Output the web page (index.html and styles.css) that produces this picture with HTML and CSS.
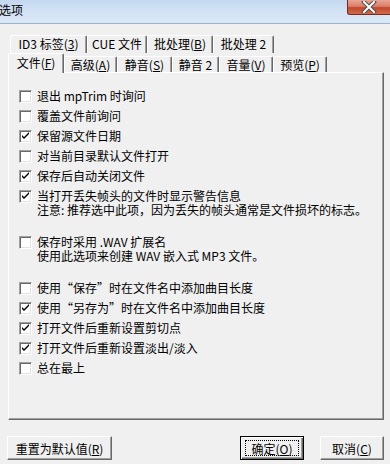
FILE: index.html
```html
<!DOCTYPE html>
<html lang="zh-CN">
<head>
    <meta charset="UTF-8">
    <meta name="viewport" content="width=device-width, initial-scale=1.0">
    <title>选项</title>
    <link rel="stylesheet" href="styles.css">
</head>
<body>
    <div class="window">
        <div class="titlebar">
            <span class="title">选项</span>
            <div class="close-btn">
                <svg width="16" height="12" viewBox="0 0 16 12">
                    <path d="M3 1 L13 11 M13 1 L3 11" stroke="#4a4a4a" stroke-width="4" stroke-linecap="square"/>
                    <path d="M3 1 L13 11 M13 1 L3 11" stroke="#ffffff" stroke-width="2" stroke-linecap="square"/>
                </svg>
            </div>
        </div>

        <div class="dialog">
            <div class="tabs">
                <div class="tab-row back">
                    <div class="tab w-id3">ID3 标签(<u>3</u>)</div>
                    <div class="tab w-cue">CUE 文件</div>
                    <div class="tab w-batch">批处理(<u>B</u>)</div>
                    <div class="tab w-batch2">批处理 2</div>
                </div>
                <div class="tab-row front">
                    <div class="tab selected w-file">文件(<u>F</u>)</div>
                    <div class="tab w-adv">高级(<u>A</u>)</div>
                    <div class="tab w-mute">静音(<u>S</u>)</div>
                    <div class="tab w-mute2">静音 2</div>
                    <div class="tab w-vol">音量(<u>V</u>)</div>
                    <div class="tab w-prev">预览(<u>P</u>)</div>
                </div>
            </div>

            <div class="panel">
                <ul class="options">
                    <li class="option"><span class="check"></span><div class="text">退出 mpTrim 时询问</div></li>
                    <li class="option"><span class="check"></span><div class="text">覆盖文件前询问</div></li>
                    <li class="option"><span class="check on"></span><div class="text">保留源文件日期</div></li>
                    <li class="option"><span class="check"></span><div class="text">对当前目录默认文件打开</div></li>
                    <li class="option"><span class="check on"></span><div class="text">保存后自动关闭文件</div></li>
                    <li class="option"><span class="check on"></span><div class="text">当打开丢失帧头的文件时显示警告信息<br>注意: 推荐选中此项，因为丢失的帧头通常是文件损坏的标志。</div></li>
                    <li class="option group"><span class="check"></span><div class="text">保存时采用 .WAV 扩展名<br>使用此选项来创建 WAV 嵌入式 MP3 文件。</div></li>
                    <li class="option group"><span class="check"></span><div class="text">使用“保存”时在文件名中添加曲目长度</div></li>
                    <li class="option"><span class="check on"></span><div class="text">使用“另存为”时在文件名中添加曲目长度</div></li>
                    <li class="option"><span class="check on"></span><div class="text">打开文件后重新设置剪切点</div></li>
                    <li class="option"><span class="check on"></span><div class="text">打开文件后重新设置淡出/淡入</div></li>
                    <li class="option"><span class="check"></span><div class="text">总在最上</div></li>
                </ul>
            </div>

            <div class="footer">
                <button class="btn btn-reset">重置为默认值(<u>R</u>)</button>
                <span class="spacer"></span>
                <button class="btn btn-default"><span class="focus">确定(<u>O</u>)</span></button>
                <button class="btn">取消(<u>C</u>)</button>
            </div>
        </div>
    </div>
</body>
</html>
```

FILE: styles.css
```css
html, body {
    margin: 0;
    padding: 0;
}

body {
    width: 390px;
    height: 464px;
    overflow: hidden;
    background-color: #f0f0f0;
    font-family: "Noto Sans CJK SC", "DejaVu Sans", sans-serif;
    font-size: 12px;
    color: #000000;
}

u {
    text-decoration: underline;
    text-underline-offset: 1px;
}

.titlebar {
    height: 23px;
    display: flex;
    justify-content: space-between;
    align-items: flex-start;
    background: linear-gradient(to bottom, #c3d7ef 0%, #d3e3f5 50%, #dbe8f7 100%);
    border-bottom: 1px solid #9db3cc;
}

.title {
    line-height: 20px;
    margin-left: -1px;
    color: #000000;
}

.close-btn {
    width: 43px;
    height: 15px;
    display: flex;
    align-items: center;
    justify-content: center;
    background: linear-gradient(to bottom, #e9a594 0%, #d9806a 45%, #c2472c 55%, #d16a4c 100%);
    border-left: 1px solid #7a2a1c;
    border-bottom: 1px solid #7a2a1c;
    border-bottom-left-radius: 3px;
    box-sizing: border-box;
}

.dialog {
    padding: 11px 6px 0 8px;
}

/* tabs */

.tab-row {
    display: flex;
    align-items: flex-end;
}

.tab-row.back {
    padding-left: 2px;
}

.tab {
    height: 17px;
    line-height: 17px;
    text-align: center;
    white-space: nowrap;
    box-sizing: border-box;
    border-top: 1px solid #ffffff;
    border-left: 1px solid #ffffff;
    border-right: 1px solid #696969;
    box-shadow: inset -1px 0 #a0a0a0;
    border-radius: 2px 2px 0 0;
    background-color: #f0f0f0;
}

.tab-row.back .tab {
    height: 18px;
    line-height: 16px;
}

.tab-row.front .tab {
    height: 16px;
    line-height: 15px;
}

.tab-row.front .tab.selected {
    height: 20px;
    line-height: 17px;
    margin-bottom: -1px;
    position: relative;
    z-index: 1;
}

.w-id3 { width: 77px; }
.w-cue { width: 60px; }
.w-batch { width: 66px; }
.w-batch2 { width: 61px; }
.w-file { width: 56px; }
.w-adv { width: 53px; }
.w-mute { width: 55px; }
.w-mute2 { width: 47px; }
.w-vol { width: 54px; }
.w-prev { width: 54px; }

/* panel */

.panel {
    width: 376px;
    height: 348px;
    box-sizing: border-box;
    border-top: 1px solid #ffffff;
    border-left: 1px solid #ffffff;
    border-right: 1px solid #696969;
    border-bottom: 1px solid #696969;
    box-shadow: inset -1px -1px #a0a0a0;
}

.options {
    list-style: none;
    margin: 0;
    padding: 13px 0 0 10px;
}

.option {
    display: flex;
    align-items: flex-start;
    gap: 5px;
    padding: 3px 0;
}

.option.group {
    margin-top: 12px;
}

.option .text {
    line-height: 14px;
    white-space: nowrap;
}

.check {
    width: 13px;
    height: 13px;
    flex: none;
    box-sizing: border-box;
    margin-top: 1px;
    background-color: #ffffff;
    border: 1px solid;
    border-color: #a0a0a0 #ffffff #ffffff #a0a0a0;
    box-shadow: inset 1px 1px #696969, inset -1px -1px #e3e3e3;
}

.check.on {
    background: #ffffff url("data:image/svg+xml;utf8,<svg xmlns='http://www.w3.org/2000/svg' width='11' height='11' viewBox='0 0 11 11'><path d='M2 4 L2 6 L4 8 L9 3 L9 1 L4 6 Z' fill='black'/></svg>") no-repeat center;
}

/* footer buttons */

.footer {
    display: flex;
    align-items: center;
    margin-top: 16px;
    margin-left: -1px;
    gap: 16px;
}

.spacer {
    flex: 1;
}

.btn {
    height: 24px;
    width: 64px;
    padding: 0;
    font-family: inherit;
    font-size: 12px;
    color: #000000;
    background-color: #f0f0f0;
    box-sizing: border-box;
    border: 1px solid;
    border-color: #ffffff #696969 #696969 #ffffff;
    box-shadow: inset -1px -1px #a0a0a0;
    display: flex;
    align-items: center;
    justify-content: center;
}

.btn-reset {
    width: 105px;
}

.btn-default {
    border: 1px solid #000000;
    box-shadow: inset 1px 1px #ffffff, inset -1px -1px #696969, inset -2px -2px #a0a0a0;
}

.btn-default .focus {
    display: flex;
    align-items: center;
    justify-content: center;
    width: 54px;
    height: 16px;
    border: 1px dotted #000000;
    box-sizing: border-box;
}
```
